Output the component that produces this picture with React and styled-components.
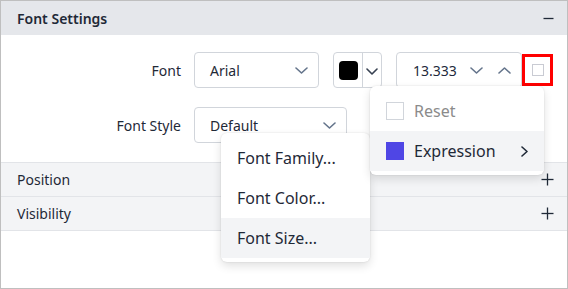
import styled, { createGlobalStyle } from "styled-components";

const GlobalStyle = createGlobalStyle`
    html, body {
        margin: 0;
        padding: 0;
        background: #ffffff;
    }
    body {
        font-family: "Noto Sans", "Open Sans", sans-serif;
        color: #1f2937;
    }
    * {
        box-sizing: border-box;
    }
`

const Chevron = ({ dir = "down", w = 13, h = 7, color = "#64748b" }) => {
    const points = dir === "down"
        ? `1,1 ${w / 2},${h - 1} ${w - 1},1`
        : dir === "up"
            ? `1,${h - 1} ${w / 2},1 ${w - 1},${h - 1}`
            : `1,1 ${w - 1},${h / 2} 1,${h - 1}`;
    return (
        <svg width={w} height={h} viewBox={`0 0 ${w} ${h}`}>
            <polyline points={points} fill="none" stroke={color} strokeWidth="1.6" strokeLinecap="round" strokeLinejoin="round" />
        </svg>
    )
}

const Minus = () => (
    <svg width="11" height="11" viewBox="0 0 11 11">
        <line x1="0.5" y1="5.5" x2="10.5" y2="5.5" stroke="#1f2937" strokeWidth="1.3" />
    </svg>
)

const Plus = () => (
    <svg width="13" height="13" viewBox="0 0 13 13">
        <line x1="0.5" y1="6.5" x2="12.5" y2="6.5" stroke="#1f2937" strokeWidth="1.3" />
        <line x1="6.5" y1="0.5" x2="6.5" y2="12.5" stroke="#1f2937" strokeWidth="1.3" />
    </svg>
)

const App = () => {
    return (
        <>
            <GlobalStyle />
            <Panel>
                <SectionHeader open>
                    <SectionTitle bold>Font Settings</SectionTitle>
                    <Minus />
                </SectionHeader>

                <Body>
                    <Label>Font</Label>
                    <Controls>
                        <Select width={125}>
                            <span>Arial</span>
                            <Chevron />
                        </Select>
                        <ColorPicker>
                            <Swatch />
                            <ColorArrow>
                                <Chevron w={12} h={7} color="#374151" />
                            </ColorArrow>
                        </ColorPicker>
                        <NumberBox>
                            <span>13.333</span>
                            <Spinners>
                                <Chevron w={13} h={7} />
                                <Chevron dir="up" w={13} h={7} />
                            </Spinners>
                        </NumberBox>
                        <Highlight>
                            <SmallCheck />
                        </Highlight>
                    </Controls>

                    <Label>Font Style</Label>
                    <Controls>
                        <Select width={153}>
                            <span>Default</span>
                            <Chevron />
                        </Select>
                    </Controls>
                </Body>

                <SectionHeader top>
                    <SectionTitle>Position</SectionTitle>
                    <Plus />
                </SectionHeader>
                <SectionHeader>
                    <SectionTitle>Visibility</SectionTitle>
                    <Plus />
                </SectionHeader>

                <Menu left={220} top={132} width={149}>
                    <MenuItem>Font Family...</MenuItem>
                    <MenuItem>Font Color...</MenuItem>
                    <MenuItem active>Font Size...</MenuItem>
                </Menu>

                <Menu left={369} top={85} width={174}>
                    <MenuItem muted>
                        <Box />
                        <ItemText>Reset</ItemText>
                    </MenuItem>
                    <MenuItem active>
                        <Box filled />
                        <ItemText>Expression</ItemText>
                        <Chevron dir="right" w={7} h={11} color="#1f2937" />
                    </MenuItem>
                </Menu>
            </Panel>
        </>
    )
}

const Panel = styled.div`
    position: relative;
    width: 568px;
    height: 289px;
    border: 1px solid #bfbfbf;
    background: #ffffff;
    overflow: hidden;
`
const SectionHeader = styled.div`
    display: flex;
    align-items: center;
    justify-content: space-between;
    height: ${props => props.top ? "35px" : "34px"};
    padding: 0 13px 0 16px;
    background: ${props => props.open ? "#e5e7eb" : "#f3f4f6"};
    border-top: ${props => props.top ? "1px solid #e2e4e8" : "none"};
    border-bottom: ${props => props.open ? "none" : "1px solid #e2e4e8"};
`
const SectionTitle = styled.div`
    font-size: 14px;
    font-weight: ${props => props.bold ? 600 : 400};
    color: #1f2937;
`
const Body = styled.div`
    display: grid;
    grid-template-columns: 180px 1fr;
    column-gap: 13px;
    row-gap: 19px;
    align-items: center;
    padding: 17px 0 19px;
`
const Label = styled.div`
    text-align: right;
    font-size: 14px;
    color: #1f2937;
`
const Controls = styled.div`
    display: flex;
    align-items: center;
`
const Select = styled.div`
    display: flex;
    align-items: center;
    justify-content: space-between;
    width: ${props => props.width}px;
    height: 36px;
    padding: 0 10px 0 15px;
    border: 1px solid #d1d5db;
    border-radius: 4px;
    font-size: 14px;
    color: #1f2937;
`
const ColorPicker = styled.div`
    display: flex;
    margin-left: 14px;
    width: 49px;
    height: 36px;
    border: 1px solid #d1d5db;
    border-radius: 4px;
`
const Swatch = styled.div`
    width: 29px;
    display: flex;
    align-items: center;
    justify-content: center;
    border-right: 1px solid #d1d5db;
    &::after {
        content: "";
        width: 19px;
        height: 19px;
        border-radius: 4px;
        background: #000000;
    }
`
const ColorArrow = styled.div`
    flex: 1;
    display: flex;
    align-items: center;
    justify-content: center;
    padding-top: 2px;
`
const NumberBox = styled.div`
    display: flex;
    align-items: center;
    justify-content: space-between;
    margin-left: 14px;
    width: 126px;
    height: 36px;
    padding: 0 10px 0 16px;
    border: 1px solid #d1d5db;
    border-radius: 4px;
    font-size: 14px;
    color: #1e293b;
`
const Spinners = styled.div`
    display: flex;
    gap: 15px;
`
const Highlight = styled.div`
    display: flex;
    align-items: center;
    justify-content: center;
    width: 31px;
    height: 32px;
    border: 3px solid #ff0000;
`
const SmallCheck = styled.div`
    width: 12px;
    height: 12px;
    border: 1px solid #c9cbd3;
`
const Menu = styled.div`
    position: absolute;
    left: ${props => props.left}px;
    top: ${props => props.top}px;
    width: ${props => props.width}px;
    padding: 5px 0 4px;
    background: #ffffff;
    border-radius: 6px;
    box-shadow: 0 4px 10px rgba(0, 0, 0, 0.12), 0 0 2px rgba(0, 0, 0, 0.12);
`
const MenuItem = styled.div`
    display: flex;
    align-items: center;
    height: 40px;
    padding: 0 16px 0 16px;
    background: ${props => props.active ? "#f3f4f6" : "transparent"};
    color: ${props => props.muted ? "#8b8b8b" : "#1f2937"};
    font-size: 16px;
`
const Box = styled.div`
    width: 18px;
    height: 18px;
    margin-right: 10px;
    background: ${props => props.filled ? "#4f46e5" : "transparent"};
    border: ${props => props.filled ? "none" : "1px solid #d1d5db"};
`
const ItemText = styled.span`
    flex: 1;
`

export default App;
